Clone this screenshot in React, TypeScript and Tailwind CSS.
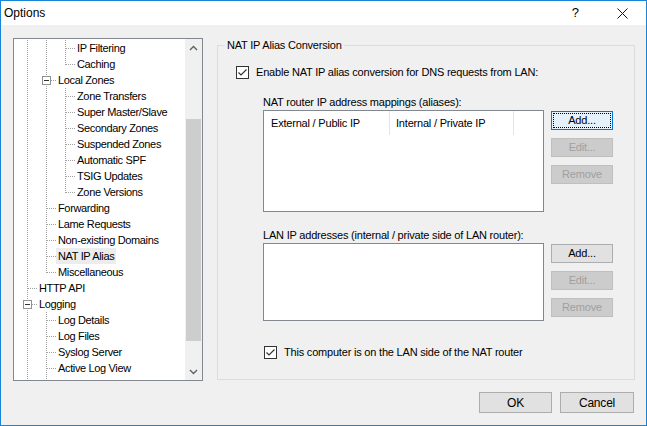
import type React from "react"

type Cell = " " | "|" | "T" | "L"

interface TreeRow {
  label: string
  cells: Cell[]
  expander?: boolean
  selected?: boolean
}

const TREE: TreeRow[] = [
  { label: "IP Filtering", cells: ["|", "|", "T"] },
  { label: "Caching", cells: ["|", "|", "L"] },
  { label: "Local Zones", cells: ["|", "T"], expander: true },
  { label: "Zone Transfers", cells: ["|", "|", "T"] },
  { label: "Super Master/Slave", cells: ["|", "|", "T"] },
  { label: "Secondary Zones", cells: ["|", "|", "T"] },
  { label: "Suspended Zones", cells: ["|", "|", "T"] },
  { label: "Automatic SPF", cells: ["|", "|", "T"] },
  { label: "TSIG Updates", cells: ["|", "|", "T"] },
  { label: "Zone Versions", cells: ["|", "|", "L"] },
  { label: "Forwarding", cells: ["|", "T"] },
  { label: "Lame Requests", cells: ["|", "T"] },
  { label: "Non-existing Domains", cells: ["|", "T"] },
  { label: "NAT IP Alias", cells: ["|", "T"], selected: true },
  { label: "Miscellaneous", cells: ["|", "L"] },
  { label: "HTTP API", cells: ["T"] },
  { label: "Logging", cells: ["T"], expander: true },
  { label: "Log Details", cells: ["|", "T"] },
  { label: "Log Files", cells: ["|", "T"] },
  { label: "Syslog Server", cells: ["|", "T"] },
  { label: "Active Log View", cells: ["|", "T"] },
  { label: "", cells: ["|", "|"] },
]

function TreeCell({ kind, expander, last }: { kind: Cell; expander?: boolean; last: boolean }) {
  const dot = { stroke: "#a0a0a0", strokeDasharray: "1 1" }
  return (
    <svg width="19" height="16" className="shrink-0 block">
      {kind !== " " && <line x1="9.5" y1="0" x2="9.5" y2={kind === "L" ? 9 : 16} {...dot} />}
      {last && (kind === "T" || kind === "L") && <line x1="10" y1="8.5" x2="19" y2="8.5" {...dot} />}
      {last && expander && (
        <>
          <rect x="5.5" y="4.5" width="8" height="8" fill="white" stroke="#919191" />
          <line x1="7" y1="8.5" x2="12" y2="8.5" stroke="#333" />
        </>
      )}
    </svg>
  )
}

function CheckBox() {
  return (
    <svg width="13" height="13" className="shrink-0 block">
      <rect x="0.5" y="0.5" width="12" height="12" fill="white" stroke="#333" />
      <polyline points="2.5,6.5 5,9 10.5,3.5" fill="none" stroke="#333" strokeWidth="1.2" />
    </svg>
  )
}

function Btn({
  children,
  disabled,
  primary,
  className = "",
}: {
  children: React.ReactNode
  disabled?: boolean
  primary?: boolean
  className?: string
}) {
  if (disabled) {
    return (
      <div className={`flex items-center justify-center border border-[#bfbfbf] bg-[#cccccc] text-[#a0a0a0] ${className}`}>
        {children}
      </div>
    )
  }
  if (primary) {
    return (
      <div className={`flex border border-[#0078d7] bg-[#e5f1fb] p-[1px] ${className}`}>
        <div className="flex flex-1 items-center justify-center border border-dotted border-black">{children}</div>
      </div>
    )
  }
  return (
    <div className={`flex items-center justify-center border border-[#adadad] bg-[#e1e1e1] ${className}`}>
      {children}
    </div>
  )
}

function Chevron({ up }: { up?: boolean }) {
  return (
    <div className="flex h-[17px] items-center justify-center">
      <svg width="9" height="6">
        <polyline
          points={up ? "1,5 4.5,1.5 8,5" : "1,1 4.5,4.5 8,1"}
          fill="none"
          stroke="#606060"
          strokeWidth="1.4"
        />
      </svg>
    </div>
  )
}

export default function App() {
  return (
    <div className="flex h-[426px] w-[647px] flex-col overflow-hidden border border-[#1883d7] bg-[#f0f0f0] font-['Liberation_Sans',Arial,sans-serif] text-[11px] tracking-[-0.2px] text-black">
      {/* Title bar */}
      <div className="flex h-[24px] shrink-0 items-center bg-white tracking-normal">
        <span className="pl-[3px] text-[12px]">Options</span>
        <span className="ml-auto mr-[38px] text-[13px]">?</span>
        <svg width="11" height="11" className="mr-[18px]">
          <path d="M0.5 0.5 L10.5 10.5 M10.5 0.5 L0.5 10.5" stroke="#111" strokeWidth="1" />
        </svg>
      </div>

      {/* Body */}
      <div className="flex flex-1 flex-col pl-[12px] pr-[11px] pt-[13px]">
        <div className="flex items-start gap-[14px]">
          {/* Tree */}
          <div className="flex h-[343px] w-[190px] border border-[#828790] bg-white tracking-[-0.35px]">
            <div className="flex-1 overflow-hidden pl-[4px] pt-[1px]">
              {TREE.map((row, r) => (
                <div key={r} className="flex h-[16px] items-center">
                  {row.cells.map((c, i) => (
                    <TreeCell key={i} kind={c} expander={row.expander} last={i === row.cells.length - 1} />
                  ))}
                  {row.label && (
                    <span
                      className={`whitespace-nowrap px-[2px] leading-[16px] ${row.selected ? "bg-[#ececec]" : ""}`}
                    >
                      {row.label}
                    </span>
                  )}
                </div>
              ))}
            </div>
            <div className="flex w-[17px] flex-col bg-[#f0f0f0]">
              <Chevron up />
              <div className="flex-1">
                <div className="mx-[1px] mt-[63px] h-[222px] bg-[#cdcdcd]" />
              </div>
              <Chevron />
            </div>
          </div>

          {/* Group box */}
          <fieldset className="h-[342px] w-[418px] border border-[#dcdcdc]">
            <legend className="ml-[7px] px-[2px] leading-[14px]">NAT IP Alias Conversion</legend>

            <div className="mt-[12px] flex h-[16px] items-center gap-[7px] pl-[18px]">
              <CheckBox />
              <span>Enable NAT IP alias conversion for DNS requests from LAN:</span>
            </div>

            <div className="pl-[45px]">
              <div className="mt-[14px] h-[16px] leading-[16px]">NAT router IP address mappings (aliases):</div>
              <div className="flex gap-[7px]">
                <div className="h-[102px] w-[281px] border border-[#828790] bg-white">
                  <div className="flex h-[24px]">
                    <div className="flex w-[126px] items-center border-r border-[#e5e5e5] pl-[7px]">External / Public IP</div>
                    <div className="flex w-[124px] items-center border-r border-[#e5e5e5] pl-[6px]">Internal / Private IP</div>
                  </div>
                </div>
                <div className="mt-[1px] flex flex-col gap-[8px]">
                  <Btn primary className="h-[19px] w-[62px]">Add...</Btn>
                  <Btn disabled className="h-[19px] w-[62px]">Edit...</Btn>
                  <Btn disabled className="h-[19px] w-[62px]">Remove</Btn>
                </div>
              </div>

              <div className="mt-[15px] h-[16px] leading-[16px]">LAN IP addresses (internal / private side of LAN router):</div>
              <div className="flex gap-[7px]">
                <div className="h-[78px] w-[281px] border border-[#828790] bg-white" />
                <div className="mt-[1px] flex flex-col gap-[8px]">
                  <Btn className="h-[19px] w-[62px]">Add...</Btn>
                  <Btn disabled className="h-[19px] w-[62px]">Edit...</Btn>
                  <Btn disabled className="h-[19px] w-[62px]">Remove</Btn>
                </div>
              </div>

              <div className="mt-[23px] flex h-[16px] items-center gap-[7px] pl-[1px]">
                <CheckBox />
                <span>This computer is on the LAN side of the NAT router</span>
              </div>
            </div>
          </fieldset>
        </div>

        {/* Dialog buttons */}
        <div className="mt-[11px] flex justify-end gap-[8px] pr-[1px]">
          <Btn className="h-[21px] w-[73px] text-[12px]">OK</Btn>
          <Btn className="h-[21px] w-[74px] text-[12px]">Cancel</Btn>
        </div>
      </div>
    </div>
  )
}
